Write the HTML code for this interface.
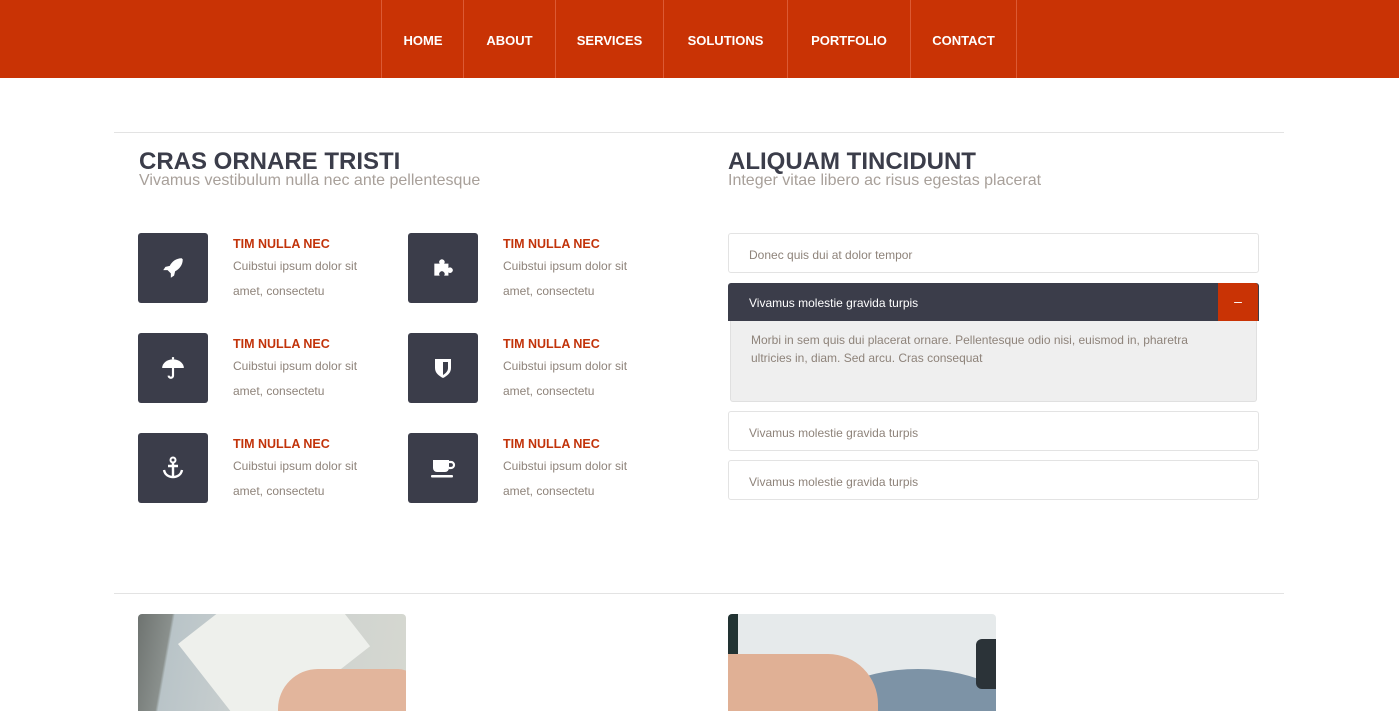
<!DOCTYPE html>
<html><head><meta charset="utf-8"><style>
*{margin:0;padding:0;box-sizing:border-box}
html,body{width:1399px;height:711px;overflow:hidden}
body{background:#fff;font-family:"Liberation Sans",sans-serif;position:relative}
.nav{position:absolute;left:0;top:0;width:1399px;height:78px;background:#c93305}
.nav a{position:absolute;top:0;height:78px;line-height:82px;color:#fff;font-weight:bold;font-size:13px;text-align:center;border-left:1px solid #dc5a34;text-decoration:none}
.hr{position:absolute;left:114px;width:1170px;height:1px;background:#e3e3e3}
h2{position:absolute;font-size:24px;color:#3b3d4a;font-weight:bold}
.sub{position:absolute;font-size:16px;color:#a8a09a}
.box{position:absolute;width:70px;height:70px;background:#3b3d4a;border-radius:3px;display:flex;align-items:center;justify-content:center}
.ft{position:absolute;font-size:12.5px;font-weight:bold;color:#c2330a}
.fd{position:absolute;font-size:12px;color:#8e837a;line-height:25px;width:150px}
.acc{position:absolute;left:728px;width:531px;height:40px;border:1px solid #e3e3e3;border-radius:3px;font-size:12px;color:#8e837a;padding-left:20px;line-height:42px}
.img{position:absolute;top:614px;width:268px;height:97px;border-radius:4px 4px 0 0;overflow:hidden}
</style></head><body>
<div class="nav">
<a style="left:381px;width:83px">HOME</a>
<a style="left:463px;width:92px">ABOUT</a>
<a style="left:555px;width:108px">SERVICES</a>
<a style="left:663px;width:124px">SOLUTIONS</a>
<a style="left:787px;width:123px">PORTFOLIO</a>
<a style="left:910px;width:107px;border-right:1px solid #dc5a34">CONTACT</a>
</div>
<div class="hr" style="top:132px"></div>
<div class="hr" style="top:593px"></div>
<h2 style="left:139px;top:148px">CRAS ORNARE TRISTI</h2>
<div class="sub" style="left:139px;top:172px">Vivamus vestibulum nulla nec ante pellentesque</div>
<h2 style="left:728px;top:148px">ALIQUAM TINCIDUNT</h2>
<div class="sub" style="left:728px;top:172px">Integer vitae libero ac risus egestas placerat</div>

<div class="box" style="left:138px;top:233px"><svg width="26" height="26" viewBox="0 0 24 24"><path d="M20 3c-5 0-9 3-11 7l-4 1-2 3 4 0 3 3 0 4 3-2 1-4c4-2 7-6 7-11z" fill="#fff"/></svg></div>
<div class="box" style="left:408px;top:233px"><svg width="26" height="26" viewBox="0 0 24 24"><path d="M4 8h5a2.5 2.5 0 1 1 4 0h4v4a2.5 2.5 0 1 1 0 4v3h-4a2.5 2.5 0 1 0-4 0H4z" fill="#fff"/></svg></div>
<div class="box" style="left:138px;top:333px"><svg width="26" height="26" viewBox="0 0 24 24"><path d="M2 12a10 8 0 0 1 20 0z" fill="#fff"/><path d="M12 4V2M12 12v7a2 2 0 0 1-4 0" stroke="#fff" stroke-width="2" fill="none"/></svg></div>
<div class="box" style="left:408px;top:333px"><svg width="22" height="24" viewBox="0 0 22 24"><path d="M3 3h16v9c0 5-4 8-8 10C7 20 3 17 3 12z" fill="#fff"/><path d="M11 6h5v6c0 3-2 5-5 7z" fill="#3b3d4a"/></svg></div>
<div class="box" style="left:138px;top:433px"><svg width="26" height="26" viewBox="0 0 26 26"><circle cx="13" cy="5" r="2.5" stroke="#fff" stroke-width="2" fill="none"/><path d="M13 7.5V22M8 11h10M4 15c1 5 5 7 9 7s8-2 9-7" stroke="#fff" stroke-width="2.4" fill="none"/></svg></div>
<div class="box" style="left:408px;top:433px"><svg width="26" height="26" viewBox="0 0 26 26"><path d="M3 5h16v8a4 4 0 0 1-4 4H7a4 4 0 0 1-4-4z" fill="#fff"/><path d="M19 7h2a3 3 0 0 1 0 6h-2" stroke="#fff" stroke-width="2.2" fill="none"/><rect x="1" y="20" width="22" height="2.5" rx="1" fill="#fff"/></svg></div>

<div class="ft" style="left:233px;top:237px">TIM NULLA NEC</div><div class="fd" style="left:233px;top:254px">Cuibstui ipsum dolor sit amet, consectetu</div>
<div class="ft" style="left:503px;top:237px">TIM NULLA NEC</div><div class="fd" style="left:503px;top:254px">Cuibstui ipsum dolor sit amet, consectetu</div>
<div class="ft" style="left:233px;top:337px">TIM NULLA NEC</div><div class="fd" style="left:233px;top:354px">Cuibstui ipsum dolor sit amet, consectetu</div>
<div class="ft" style="left:503px;top:337px">TIM NULLA NEC</div><div class="fd" style="left:503px;top:354px">Cuibstui ipsum dolor sit amet, consectetu</div>
<div class="ft" style="left:233px;top:437px">TIM NULLA NEC</div><div class="fd" style="left:233px;top:454px">Cuibstui ipsum dolor sit amet, consectetu</div>
<div class="ft" style="left:503px;top:437px">TIM NULLA NEC</div><div class="fd" style="left:503px;top:454px">Cuibstui ipsum dolor sit amet, consectetu</div>

<div class="acc" style="top:233px">Donec quis dui at dolor tempor</div>
<div style="position:absolute;left:730px;top:320px;width:527px;height:82px;background:#efefef;border:1px solid #e0e0e0;border-top:none;border-radius:0 0 3px 3px;font-size:12px;color:#8e837a;line-height:18px;padding:11px 40px 11px 20px">Morbi in sem quis dui placerat ornare. Pellentesque odio nisi, euismod in, pharetra ultricies in, diam. Sed arcu. Cras consequat</div>
<div style="position:absolute;left:728px;top:283px;width:531px;height:38px;background:#3b3d4a;border-radius:3px 3px 0 0;color:#fff;font-size:12px;line-height:40px;padding-left:21px">Vivamus molestie gravida turpis</div>
<div style="position:absolute;left:1218px;top:283px;width:40px;height:38px;background:#c93305;border-radius:0 3px 0 0;color:#fff;text-align:center;line-height:36px;font-size:14px">–</div>
<div class="acc" style="top:411px">Vivamus molestie gravida turpis</div>
<div class="acc" style="top:460px">Vivamus molestie gravida turpis</div>

<div class="img" style="left:138px;background:linear-gradient(100deg,#6e7370 0%,#8a908d 12%,#b9c4c8 13%,#c9cfcf 40%,#d6d8d0 100%)">
<div style="position:absolute;left:40px;top:30px;width:150px;height:120px;background:#eef0ec;transform:rotate(-38deg);transform-origin:0 0"></div>
<div style="position:absolute;left:140px;top:55px;width:140px;height:60px;background:#e2b59c;border-radius:40px 20px 0 0"></div>
</div>
<div class="img" style="left:728px;background:#e6eaeb">
<div style="position:absolute;left:80px;top:55px;width:220px;height:120px;background:#7d93a6;border-radius:50%"></div>
<div style="position:absolute;left:0;top:40px;width:150px;height:70px;background:#e0b095;border-radius:0 50px 0 0"></div>
<div style="position:absolute;left:0;top:0;width:10px;height:40px;background:#233"></div>
<div style="position:absolute;left:248px;top:25px;width:20px;height:50px;background:#2b3338;border-radius:6px 0 0 6px"></div>
</div>
</body></html>
